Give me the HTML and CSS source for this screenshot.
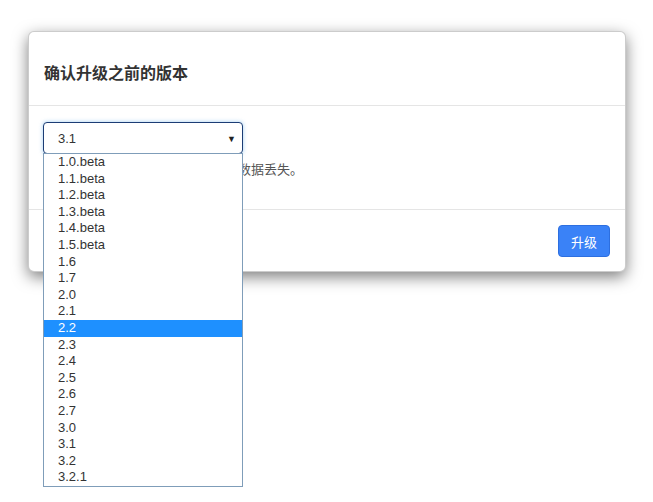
FILE: index.html
```html
<!DOCTYPE html>
<html lang="zh-CN">
<head>
<meta charset="utf-8">
<title>确认升级之前的版本</title>
<link rel="stylesheet" href="styles.css">
</head>
<body>
<div class="modal">
  <div class="modal-header">
    <h4 class="modal-title">确认升级之前的版本</h4>
  </div>
  <div class="modal-body">
    <div class="select-wrap">
      <div class="select">
        <span class="select-value">3.1</span>
        <span class="select-arrow">▼</span>
      </div>
      <ul class="options">
        <li>1.0.beta</li>
        <li>1.1.beta</li>
        <li>1.2.beta</li>
        <li>1.3.beta</li>
        <li>1.4.beta</li>
        <li>1.5.beta</li>
        <li>1.6</li>
        <li>1.7</li>
        <li>2.0</li>
        <li>2.1</li>
        <li class="active">2.2</li>
        <li>2.3</li>
        <li>2.4</li>
        <li>2.5</li>
        <li>2.6</li>
        <li>2.7</li>
        <li>3.0</li>
        <li>3.1</li>
        <li>3.2</li>
        <li>3.2.1</li>
      </ul>
    </div>
    <p class="hint">升级前请先备份，否则可能会导致数据丢失。</p>
  </div>
  <div class="modal-footer">
    <button class="btn-primary">升级</button>
  </div>
</div>
</body>
</html>
```

FILE: styles.css
```css
html, body {
  margin: 0;
  padding: 0;
  background: #fff;
}
html {
  height: 100%;
}
body {
  min-height: 100%;
  font-family: "Liberation Sans", "Noto Sans CJK SC", sans-serif;
  color: #333;
  font-size: 13px;
}
.modal {
  margin: 31px 0 0 28px;
  width: 598px;
  box-sizing: border-box;
  background: #fff;
  border: 1px solid rgba(0, 0, 0, 0.2);
  border-radius: 6px;
  box-shadow: 0 5px 15px rgba(0, 0, 0, 0.5);
}
.modal-header {
  padding: 29px 15px 22px;
  border-bottom: 1px solid #e5e5e5;
}
.modal-title {
  margin: 0;
  font-family: "Noto Sans CJK SC", sans-serif;
  font-size: 16px;
  line-height: 22px;
  font-weight: 700;
  color: #333;
}
.modal-body {
  padding: 16px 14px 30px;
}
.select-wrap {
  position: relative;
  width: 200px;
}
.select {
  box-sizing: border-box;
  height: 32px;
  display: flex;
  align-items: center;
  justify-content: space-between;
  padding: 1px 6px 0 14px;
  border: 1px solid #1c3d75;
  border-radius: 4px;
  box-shadow: 0 0 4px rgba(102, 175, 233, 0.6);
  background: #fff;
  font-size: 13px;
  color: #333;
}
.select-arrow {
  font-size: 9px;
  color: #222;
}
.options {
  position: absolute;
  left: 0;
  top: 31px;
  width: 200px;
  box-sizing: border-box;
  margin: 0;
  padding: 0;
  list-style: none;
  background: #fff;
  border: 1px solid #7f9db9;
  z-index: 10;
}
.options li {
  height: 16.6px;
  line-height: 16.6px;
  padding-left: 14px;
  font-size: 13px;
  color: #333;
}
.options li.active {
  background: #1e90ff;
  color: #fff;
}
.hint {
  margin: 5px 0 0;
  line-height: 20px;
  font-family: "Noto Sans CJK SC", sans-serif;
  font-size: 13px;
  color: #555;
}
.modal-footer {
  display: flex;
  justify-content: flex-end;
  padding: 15px 15px 14px;
  border-top: 1px solid #e5e5e5;
}
.btn-primary {
  height: 32px;
  padding: 0 12px;
  font-family: "Noto Sans CJK SC", sans-serif;
  font-size: 13px;
  color: #fff;
  background: #3a82f7;
  border: 1px solid #2d6fe0;
  border-radius: 4px;
}
```
